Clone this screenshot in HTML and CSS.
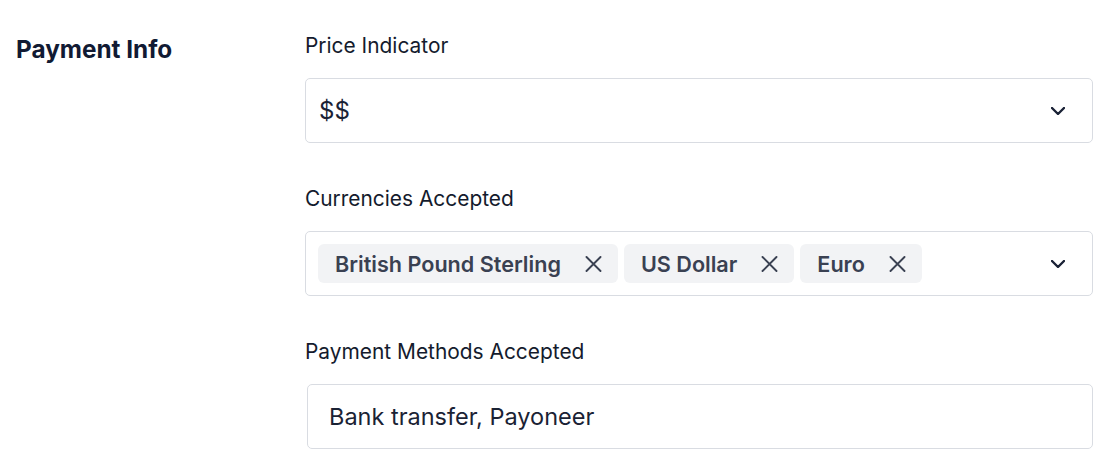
FILE: index.html
```html
<!DOCTYPE html>
<html lang="en">
<head>
<meta charset="utf-8">
<title>Payment Info</title>
<link rel="stylesheet" href="styles.css">
</head>
<body>
<section class="section">
  <div class="side">
    <h2 class="heading">Payment Info</h2>
  </div>
  <div class="fields">
    <div class="field">
      <label class="label">Price Indicator</label>
      <div class="box select">
        <span class="value">$$</span>
        <svg class="chevron" width="14" height="8" viewBox="0 0 14 8"><path d="M1 1l6 6 6-6" fill="none" stroke="#1a2236" stroke-width="2.4" stroke-linecap="round" stroke-linejoin="round"/></svg>
      </div>
    </div>
    <div class="field">
      <label class="label">Currencies Accepted</label>
      <div class="box select multi">
        <div class="tags">
          <span class="tag">British Pound Sterling<svg class="x" width="17" height="16" viewBox="0 0 17 16"><path d="M1.5 1l14 14M15.5 1l-14 14" fill="none" stroke="#3a4152" stroke-width="1.9" stroke-linecap="round"/></svg></span>
          <span class="tag">US Dollar<svg class="x" width="17" height="16" viewBox="0 0 17 16"><path d="M1.5 1l14 14M15.5 1l-14 14" fill="none" stroke="#3a4152" stroke-width="1.9" stroke-linecap="round"/></svg></span>
          <span class="tag">Euro<svg class="x" width="17" height="16" viewBox="0 0 17 16"><path d="M1.5 1l14 14M15.5 1l-14 14" fill="none" stroke="#3a4152" stroke-width="1.9" stroke-linecap="round"/></svg></span>
        </div>
        <svg class="chevron" width="14" height="8" viewBox="0 0 14 8"><path d="M1 1l6 6 6-6" fill="none" stroke="#1a2236" stroke-width="2.4" stroke-linecap="round" stroke-linejoin="round"/></svg>
      </div>
    </div>
    <div class="field">
      <label class="label">Payment Methods Accepted</label>
      <div class="box input">
        <span class="value small">Bank transfer, Payoneer</span>
      </div>
    </div>
  </div>
</section>
</body>
</html>
```

FILE: styles.css
```css
* { box-sizing: border-box; }
html, body { margin: 0; padding: 0; background: #fff; }
body {
  font-family: Inter, "Noto Sans", "Liberation Sans", sans-serif;
  color: #141b2d;
}
.section {
  display: flex;
  padding-top: 32px;
}
.side {
  width: 305px;
  padding-left: 16px;
  flex: none;
}
.heading {
  margin: 0;
  font-size: 24.3px;
  line-height: 34px;
  font-weight: 700;
  color: #111a33;
}
.fields {
  width: 788px;
  display: flex;
  flex-direction: column;
  gap: 42px;
}
.field {
  display: flex;
  flex-direction: column;
}
.label {
  font-size: 20.9px;
  line-height: 28px;
  margin-bottom: 18px;
  color: #141b2d;
}
.box {
  height: 65px;
  border: 1px solid #d9dce2;
  border-radius: 5px;
  display: flex;
  align-items: center;
}
.select {
  padding-left: 13px;
  padding-right: 27px;
  justify-content: space-between;
}
.value {
  font-size: 24px;
  color: #1a2234;
}
.value.small {
  font-size: 23.5px;
}
.multi {
  padding-left: 12px;
}
.tags {
  display: flex;
  gap: 6px;
}
.tag {
  display: inline-flex;
  align-items: center;
  height: 39px;
  padding: 0 16px 0 17px;
  gap: 24px;
  background: #f2f3f5;
  border-radius: 6px;
  font-size: 21.6px;
  font-weight: 600;
  color: #3a4152;
}
.x { flex: none; }
.chevron { flex: none; }
.input {
  margin-left: 2px;
  padding-left: 21px;
}
```
